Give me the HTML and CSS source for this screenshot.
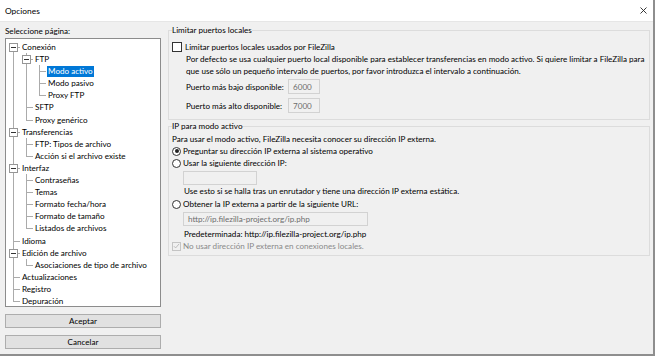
FILE: index.html
```html
<!DOCTYPE html>
<html lang="es">
  <head>
    <meta charset="UTF-8" />
    <meta name="viewport" content="width=device-width, initial-scale=1.0" />
    <title>Opciones</title>
    <link rel="stylesheet" href="styles.css">
  </head>
  <body>
    <div class="window">
      <div class="titlebar">
        <span class="title">Opciones</span>
        <svg class="close" width="7" height="7" viewBox="0 0 7 7">
          <path d="M0.5 0.5 L6.5 6.5 M6.5 0.5 L0.5 6.5" stroke="#222" stroke-width="0.9" fill="none" />
        </svg>
      </div>

      <div class="dialog">
        <div class="sidebar">
          <div class="caption">Seleccione página:</div>
          <div class="tree">
            <ul class="tree-root">
              <li><span class="toggle"></span>Conexión
                <ul>
                  <li><span class="toggle"></span>FTP
                    <ul>
                      <li><span class="selected">Modo activo</span></li>
                      <li>Modo pasivo</li>
                      <li>Proxy FTP</li>
                    </ul>
                  </li>
                  <li>SFTP</li>
                  <li>Proxy genérico</li>
                </ul>
              </li>
              <li><span class="toggle"></span>Transferencias
                <ul>
                  <li>FTP: Tipos de archivo</li>
                  <li>Acción si el archivo existe</li>
                </ul>
              </li>
              <li><span class="toggle"></span>Interfaz
                <ul>
                  <li>Contraseñas</li>
                  <li>Temas</li>
                  <li>Formato fecha/hora</li>
                  <li>Formato de tamaño</li>
                  <li>Listados de archivos</li>
                </ul>
              </li>
              <li>Idioma</li>
              <li><span class="toggle"></span>Edición de archivo
                <ul>
                  <li>Asociaciones de tipo de archivo</li>
                </ul>
              </li>
              <li>Actualizaciones</li>
              <li>Registro</li>
              <li>Depuración</li>
            </ul>
          </div>
          <button class="btn btn-ok">Aceptar</button>
          <button class="btn">Cancelar</button>
        </div>

        <div class="content">
          <fieldset class="group ports">
            <legend>Limitar puertos locales</legend>
            <div class="row">
              <span class="check"></span>
              <span>Limitar puertos locales usados por FileZilla</span>
            </div>
            <div class="note">
              Por defecto se usa cualquier puerto local disponible para establecer transferencias en modo activo. Si quiere limitar a FileZilla para<br>
              que use sólo un pequeño intervalo de puertos, por favor introduzca el intervalo a continuación.
            </div>
            <div class="port-row">
              <span class="port-label">Puerto más bajo disponible:</span>
              <span class="field port">6000</span>
            </div>
            <div class="port-row second">
              <span class="port-label">Puerto más alto disponible:</span>
              <span class="field port">7000</span>
            </div>
          </fieldset>

          <fieldset class="group ip">
            <legend>IP para modo activo</legend>
            <div class="row">Para usar el modo activo, FileZilla necesita conocer su dirección IP externa.</div>
            <div class="row">
              <span class="radio on"></span>
              <span>Preguntar su dirección IP externa al sistema operativo</span>
            </div>
            <div class="row">
              <span class="radio"></span>
              <span>Usar la siguiente dirección IP:</span>
            </div>
            <span class="field ip-field"></span>
            <div class="row indent">Use esto si se halla tras un enrutador y tiene una dirección IP externa estática.</div>
            <div class="row spaced">
              <span class="radio"></span>
              <span>Obtener la IP externa a partir de la siguiente URL:</span>
            </div>
            <span class="field url-field">http://ip.filezilla-project.org/ip.php</span>
            <div class="row indent spaced2">Predeterminada: http://ip.filezilla-project.org/ip.php</div>
            <div class="row disabled">
              <span class="check off">
                <svg width="8" height="8" viewBox="0 0 8 8">
                  <path d="M1 4.2 L3 6.2 L7 1.6" stroke="#b4b4b4" stroke-width="1" fill="none" />
                </svg>
              </span>
              <span>No usar dirección IP externa en conexiones locales.</span>
            </div>
          </fieldset>
        </div>
      </div>
    </div>
  </body>
</html>
```

FILE: styles.css
```css
body {
  margin: 0;
  font-family: "Lato", "Noto Sans", sans-serif;
  font-size: 8.1px;
  color: #000;
  background: #f0f0f0;
}

.window {
  width: 653px;
  height: 354px;
  border-right: 2px solid #8e8e8e;
  border-bottom: 2px solid #8e8e8e;
  background: #f0f0f0;
  overflow: hidden;
}

.titlebar {
  height: 21px;
  background: #fff;
  border-bottom: 1px solid #e6e6e6;
  display: flex;
  align-items: center;
  justify-content: space-between;
  padding: 0 6px 0 5px;
  font-size: 8.4px;
}

.close {
  display: block;
  margin-top: -1px;
}

.dialog {
  display: flex;
  gap: 7px;
  padding-left: 5px;
}

/* left column */
.sidebar {
  width: 156px;
  padding-top: 3px;
  display: flex;
  flex-direction: column;
}

.caption {
  line-height: 12px;
}

.tree {
  margin-top: 1px;
  height: 269px;
  box-sizing: border-box;
  background: #fff;
  border: 1px solid #8c8c8c;
  padding-top: 2px;
  overflow: hidden;
}

.tree ul {
  list-style: none;
  margin: 0 0 0 4px;
  padding: 0;
}

.tree .tree-root {
  margin: 0;
  padding-left: 7px;
}

.tree li {
  position: relative;
  padding-left: 9px;
  line-height: 12.1px;
  white-space: nowrap;
}

.tree li::before {
  content: "";
  position: absolute;
  left: 0;
  top: 6px;
  width: 7px;
  border-top: 1px solid #ababab;
}

.tree li::after {
  content: "";
  position: absolute;
  left: 0;
  top: 0;
  bottom: 0;
  border-left: 1px solid #ababab;
}

.tree li:last-child::after {
  bottom: auto;
  height: 6px;
}

.tree .tree-root > li:first-child::after {
  top: 6px;
}

.toggle {
  position: absolute;
  left: -4px;
  top: 2px;
  width: 7px;
  height: 7px;
  border: 1px solid #969696;
  background: #fff;
  z-index: 1;
}

.toggle::after {
  content: "";
  position: absolute;
  left: 1px;
  top: 3px;
  width: 5px;
  border-top: 1px solid #333;
}

.selected {
  display: inline-block;
  background: #0078d7;
  color: #fff;
  margin-left: -1px;
  padding: 0 1px;
  line-height: 11px;
}

.btn {
  height: 14px;
  margin-top: 7px;
  padding: 0;
  font: inherit;
  color: #000;
  background: #e1e1e1;
  border: 1px solid #adadad;
}

/* right column */
.content {
  width: 482px;
  padding-top: 2px;
}

.group {
  margin: 0;
  min-width: 0;
  border: 1px solid #dcdcdc;
  padding: 5px 3px 6px;
}

.group legend {
  padding: 0;
  line-height: 12px;
}

.group.ip {
  padding-top: 1px;
  padding-bottom: 3px;
}

.row {
  display: flex;
  align-items: center;
  height: 12px;
  white-space: nowrap;
}

.note {
  margin-left: 14px;
  line-height: 12px;
  white-space: nowrap;
}

.port-row {
  display: flex;
  align-items: center;
  margin-top: 2px;
  margin-left: 14px;
}

.port-row.second {
  margin-top: 4px;
}

.port-label {
  width: 102px;
}

.field {
  display: flex;
  align-items: center;
  box-sizing: border-box;
  border: 1px solid #d2d2d2;
  background: #f0f0f0;
  color: #6d6d6d;
  padding-left: 4px;
}

.port {
  width: 32px;
  height: 15px;
}

.ip-field {
  width: 74px;
  height: 14px;
  margin: 2px 0 0 11px;
}

.url-field {
  width: 185px;
  height: 14px;
  margin: 2px 0 0 11px;
}

.indent {
  padding-left: 12px;
}

.spaced {
  margin-top: 1px;
}

.spaced2 {
  margin-top: 2px;
}

.check {
  display: inline-flex;
  align-items: center;
  justify-content: center;
  width: 10px;
  height: 10px;
  box-sizing: border-box;
  border: 1px solid #333;
  background: #fff;
  margin-right: 3px;
}

.check.off {
  width: 9px;
  height: 9px;
  border-color: #c4c4c4;
  background: #f0f0f0;
  margin-right: 2px;
}

.radio {
  position: relative;
  display: inline-block;
  width: 9px;
  height: 9px;
  box-sizing: border-box;
  border: 1px solid #333;
  border-radius: 50%;
  background: #fff;
  margin-right: 2px;
}

.radio.on::after {
  content: "";
  position: absolute;
  left: 1.5px;
  top: 1.5px;
  width: 4px;
  height: 4px;
  border-radius: 50%;
  background: #222;
}

.disabled {
  color: #8a8a8a;
}
```
